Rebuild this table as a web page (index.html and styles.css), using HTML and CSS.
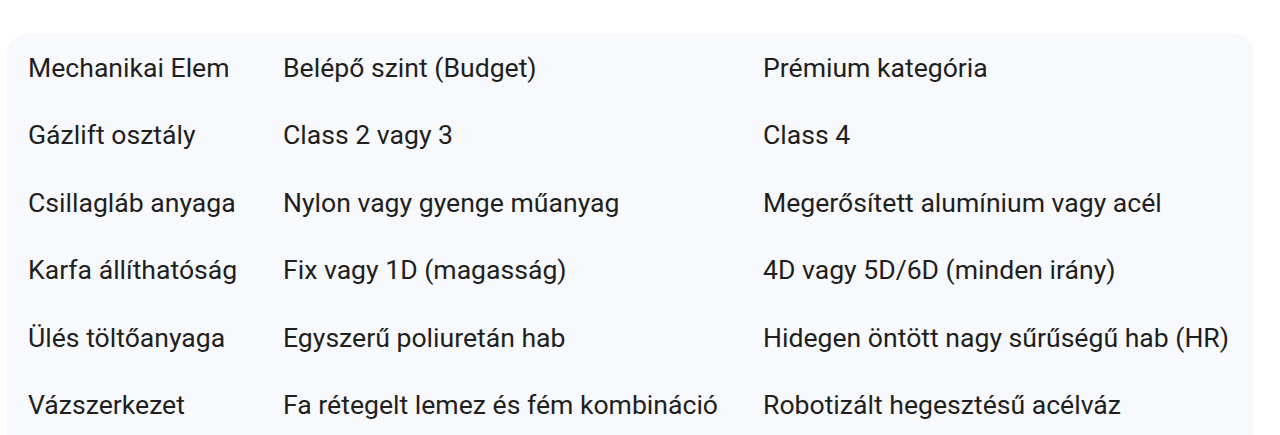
FILE: index.html
```html
<!DOCTYPE html>
<html lang="hu">
<head>
<meta charset="utf-8">
<link rel="stylesheet" href="styles.css">
</head>
<body>
<div class="page">
  <div class="panel">
    <table class="spec">
      <colgroup>
        <col class="c1"><col class="c2"><col class="c3">
      </colgroup>
      <tr><td>Mechanikai Elem</td><td>Belépő szint (Budget)</td><td>Prémium kategória</td></tr>
      <tr><td>Gázlift osztály</td><td>Class 2 vagy 3</td><td>Class 4</td></tr>
      <tr><td>Csillagláb anyaga</td><td>Nylon vagy gyenge műanyag</td><td>Megerősített alumínium vagy acél</td></tr>
      <tr><td>Karfa állíthatóság</td><td>Fix vagy 1D (magasság)</td><td>4D vagy 5D/6D (minden irány)</td></tr>
      <tr><td>Ülés töltőanyaga</td><td>Egyszerű poliuretán hab</td><td>Hidegen öntött nagy sűrűségű hab (HR)</td></tr>
      <tr><td>Vázszerkezet</td><td>Fa rétegelt lemez és fém kombináció</td><td>Robotizált hegesztésű acélváz</td></tr>
    </table>
  </div>
</div>
</body>
</html>
```

FILE: styles.css
```css
html, body {
  margin: 0;
  padding: 0;
  background: #ffffff;
}
body {
  font-family: Roboto, "Liberation Sans", Arial, sans-serif;
  color: #1f1f1f;
  overflow: hidden;
}
.page {
  padding: 33px 26px 0 7px;
}
.panel {
  background: #f8f9fc;
  border-radius: 22px;
  padding: 1px 21px 40px 21px;
}
.spec {
  border-collapse: collapse;
  width: 100%;
  table-layout: fixed;
  font-size: 26.6px;
}
.c1 { width: 255px; }
.c2 { width: 480px; }
.spec td {
  padding: 16px 0;
  line-height: 35.4px;
  white-space: nowrap;
  vertical-align: middle;
}
```
